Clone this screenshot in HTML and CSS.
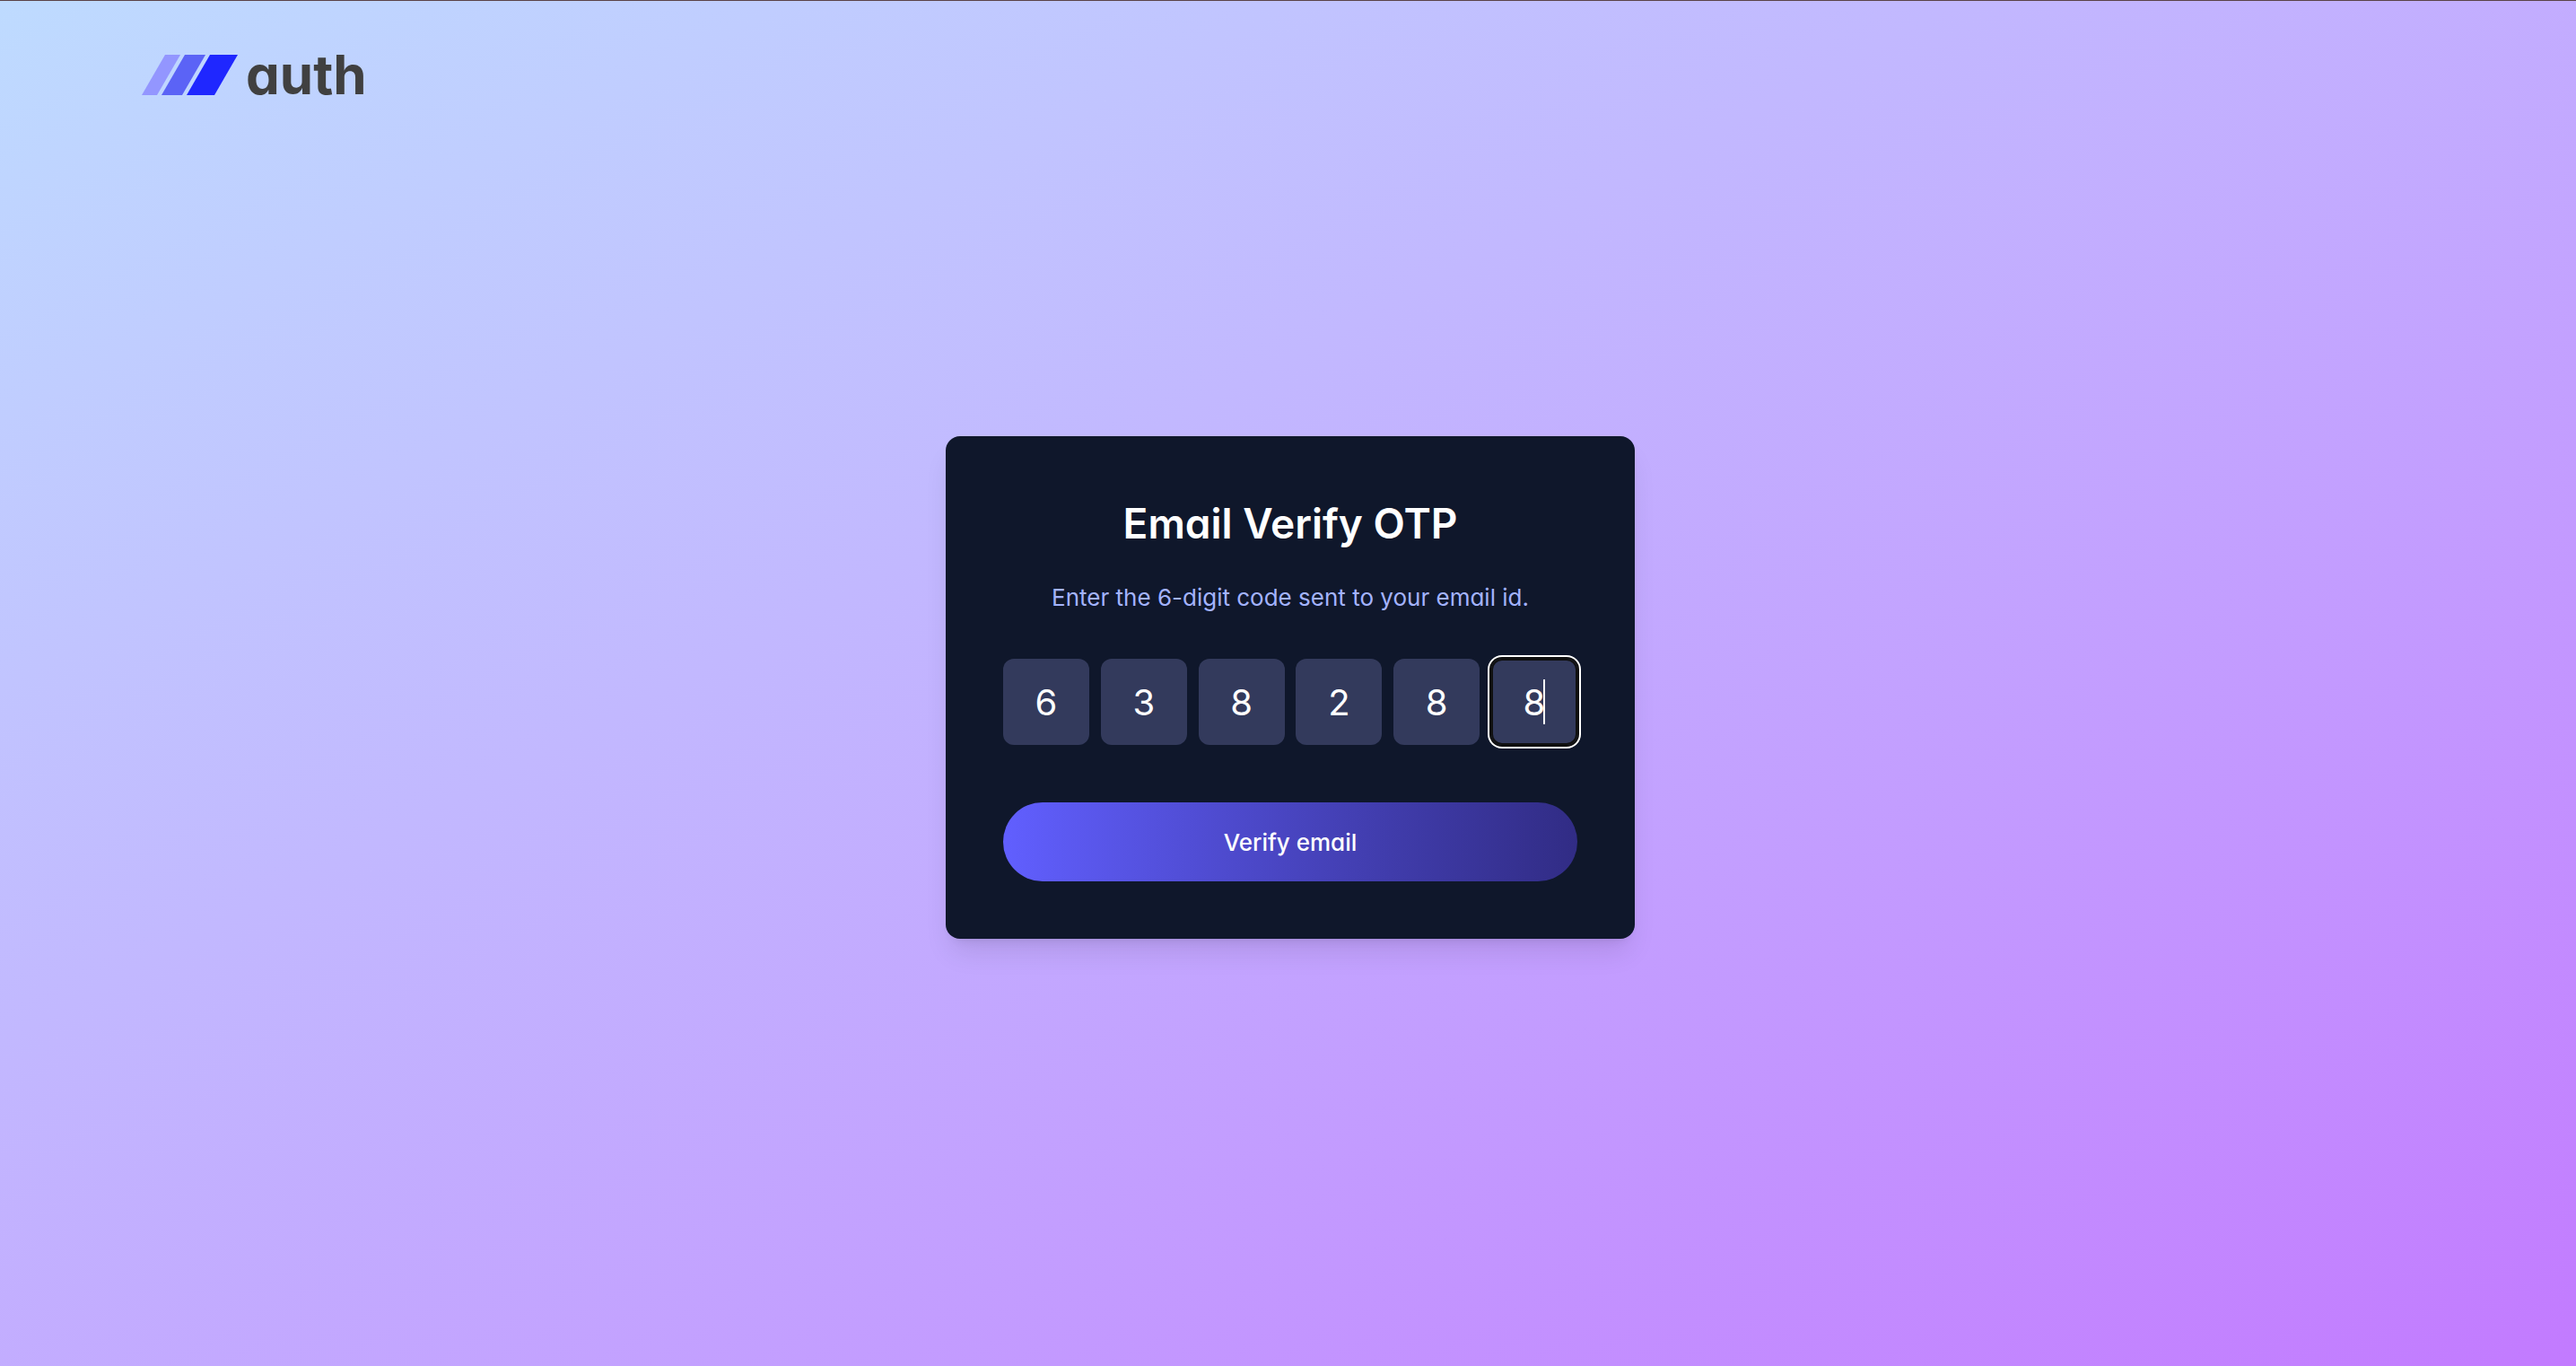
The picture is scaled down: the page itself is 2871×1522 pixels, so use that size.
FILE: index.html
```html
<!DOCTYPE html>
<html lang="en">
<head>
  <meta charset="utf-8">
  <meta name="viewport" content="width=device-width, initial-scale=1">
  <title>Email Verify OTP</title>
  <link rel="stylesheet" href="styles.css">
</head>
<body>
  <div class="page">
    <header class="header">
      <a class="logo" href="#">
        <svg class="logo-mark" viewBox="0 0 108 45" aria-hidden="true">
          <path d="M26 0H43L17 45H0Z" fill="#9396ff"/>
          <path d="M48 0H71L45 45H22Z" fill="#5b63f6"/>
          <path d="M76 0H107L81 45H50Z" fill="#1f27ff"/>
        </svg>
        <span class="logo-text">auth</span>
      </a>
    </header>
    <main class="main">
      <form class="card">
        <h1 class="title">Email Verify OTP</h1>
        <p class="subtitle">Enter the 6-digit code sent to your email id.</p>
        <div class="digits">
          <div class="cell"><input class="digit" type="text" maxlength="1" value="6" aria-label="Digit 1" required></div>
          <div class="cell"><input class="digit" type="text" maxlength="1" value="3" aria-label="Digit 2" required></div>
          <div class="cell"><input class="digit" type="text" maxlength="1" value="8" aria-label="Digit 3" required></div>
          <div class="cell"><input class="digit" type="text" maxlength="1" value="2" aria-label="Digit 4" required></div>
          <div class="cell"><input class="digit" type="text" maxlength="1" value="8" aria-label="Digit 5" required></div>
          <div class="cell"><input class="digit digit-active" type="text" maxlength="1" value="8" aria-label="Digit 6" required><span class="caret"></span></div>
        </div>
        <button class="submit" type="submit">Verify email</button>
      </form>
    </main>
  </div>
</body>
</html>
```
FILE: styles.css
```css
* {
  box-sizing: border-box;
  margin: 0;
}

body {
  font-family: Inter, "Liberation Sans", sans-serif;
  font-feature-settings: "cv11";
}

.page {
  min-height: 100vh;
  display: grid;
  border-top: 1px solid #5a4248;
  background: linear-gradient(to bottom right in oklab, #bedbff, #c27aff) border-box;
}

.header,
.main {
  grid-area: 1 / 1;
}

.header {
  align-self: start;
  justify-self: start;
  padding: 52px 158px;
}

.logo {
  display: flex;
  align-items: center;
  gap: 8px;
  height: 60px;
  color: #404040;
  text-decoration: none;
}

.logo-mark {
  width: 108px;
  height: 45px;
}

.logo-text {
  font-size: 60px;
  line-height: 60px;
  font-weight: 700;
}

.main {
  display: flex;
  align-items: center;
  justify-content: center;
  padding: 9px 0 0 5px;
}

.card {
  width: 768px;
  padding: 64px;
  border-radius: 16px;
  background: #0f172b;
  box-shadow: 0 20px 30px -6px rgb(0 0 0 / 10%), 0 8px 12px -8px rgb(0 0 0 / 10%);
}

.title {
  margin-bottom: 29px;
  color: #fff;
  font-size: 46px;
  line-height: 67px;
  font-weight: 600;
  text-align: center;
}

.subtitle {
  margin-bottom: 48px;
  color: #a3b3ff;
  font-size: 26px;
  line-height: 40px;
  text-align: center;
}

.digits {
  display: flex;
  justify-content: space-between;
  margin-bottom: 64px;
}

.cell {
  position: relative;
  width: 96px;
  height: 96px;
}

.digit {
  width: 100%;
  height: 100%;
  padding: 0;
  border: 0;
  border-radius: 12px;
  background: #333a5c;
  color: #fff;
  font: inherit;
  font-size: 40px;
  text-align: center;
  outline: 0;
}

.digit:focus,
.digit-active {
  box-shadow: inset 0 0 0 2px #101010, 0 0 0 2px #101010, 0 0 0 4px #fff;
}

.caret {
  position: absolute;
  top: 23px;
  left: 58px;
  width: 2px;
  height: 50px;
  background: #fff;
}

.submit {
  width: 100%;
  height: 88px;
  border: 0;
  border-radius: 44px;
  background: linear-gradient(to right in oklab, #615fff, #312c85);
  color: #fff;
  font: inherit;
  font-size: 26px;
  font-weight: 500;
}
```
